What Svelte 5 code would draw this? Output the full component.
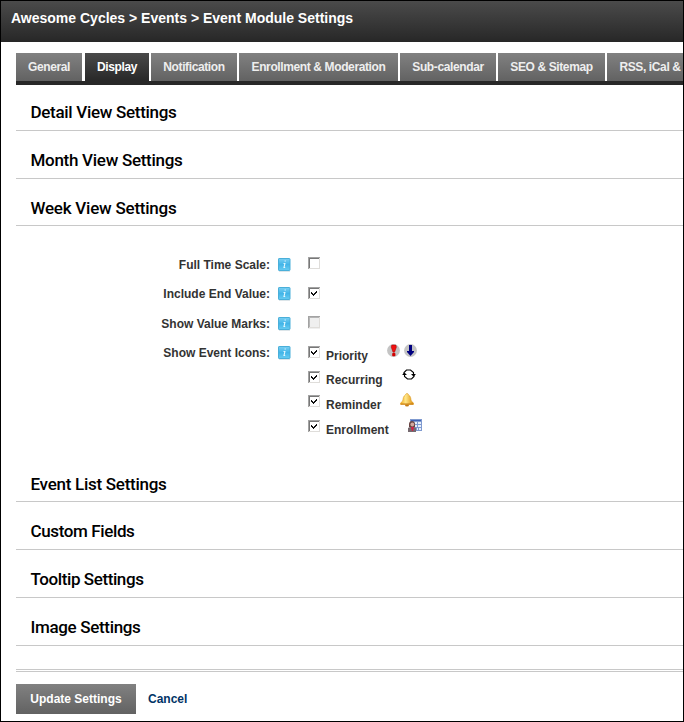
<script>
  const tabs = [
    { name: 'General', w: 66, gap: 3 },
    { name: 'Display', w: 64, gap: 2, active: true },
    { name: 'Notification', w: 86, gap: 2 },
    { name: 'Enrollment & Moderation', w: 159, gap: 2 },
    { name: 'Sub-calendar', w: 96, gap: 2 },
    { name: 'SEO & Sitemap', w: 107, gap: 2 },
    { name: 'RSS, iCal &', w: 86, gap: 0 }
  ];
  const upper = [
    { name: 'Detail View Settings', h: 46, w: 146 },
    { name: 'Month View Settings', h: 48, w: 152 },
    { name: 'Week View Settings', h: 47, w: 146, tight: true }
  ];
  const lower = [
    { name: 'Event List Settings', h: 48, w: 136, tight: true },
    { name: 'Custom Fields', h: 48, w: 104 },
    { name: 'Tooltip Settings', h: 48, w: 113 },
    { name: 'Image Settings', h: 48, w: 110 }
  ];
  const fields = [
    { label: 'Full Time Scale:', h: 30 },
    { label: 'Include End Value:', h: 29, checked: true, raised: true },
    { label: 'Show Value Marks:', h: 30, disabled: true },
    { label: 'Show Event Icons:', h: 25, checked: true, raised: true, option: 'Priority' }
  ];
  const options = [
    { name: 'Recurring', h: 24 },
    { name: 'Reminder', h: 25, low: true },
    { name: 'Enrollment', h: 25, low: true }
  ];

  function fit(node, width) {
    const extra = (width - node.getBoundingClientRect().width) / node.textContent.length;
    node.style.letterSpacing = `${extra}px`;
  }
</script>

{#snippet check(checked, disabled)}
  <svg class="check" width="13" height="13" viewBox="0 0 13 13" shape-rendering="crispEdges">
    <path fill={disabled ? '#efefef' : '#fff'} d="M0 0h12v13H0z" />
    <path fill="#dfddda" d="M11 1h1v11H1v-1h10z" />
    <path fill="#a3a3a3" d="M0 0h12v1H1v11H0z" />
    <path fill={disabled ? '#b5b5b5' : '#777'} d="M1 1h10v1H2v9H1z" />
    {#if checked}
      <path fill="#111" d="M3 5h1v1h1v1h1v-1h1v-1h1v-1h1v2h-1v1h-1v1h-1v1h-1v-1h-1v-1h-1z" />
    {/if}
  </svg>
{/snippet}

{#snippet info()}
  <svg class="info" width="13" height="14" viewBox="0 0 13 14">
    <defs>
      <linearGradient id="blue" x2="0" y2="1">
        <stop stop-color="#7bd0f3" /><stop offset=".5" stop-color="#43b5e8" /><stop offset="1" stop-color="#67ccf2" />
      </linearGradient>
    </defs>
    <path d="M1 13.5h11" stroke="#dce5e9" />
    <rect x=".5" y=".5" width="11.5" height="12" rx=".6" fill="url(#blue)" stroke="#4aafd9" />
    <path d="M6.600 3h1.200M5.500 5.500h1.400l-.9 4h1.200" stroke="#e6f8ff" stroke-width="1.100" fill="none" />
  </svg>
{/snippet}

{#snippet heading(item)}
  <div class="section" class:tight={item.tight} style:height="{item.h}px"><h2 use:fit={item.w}>{item.name}</h2></div>
{/snippet}

<div class="page">
  <header>Awesome Cycles &gt; Events &gt; Event Module Settings</header>
  <main>
    <nav>
      {#each tabs as t}
        <button class:active={t.active} style:width="{t.w}px" style:margin-right="{t.gap}px">{t.name}</button>
      {/each}
    </nav>
    {#each upper as item}{@render heading(item)}{/each}
    <div class="fields">
      {#each fields as f}
        <div class="row" class:raised={f.raised} style:height="{f.h}px">
          <span class="label">{f.label}</span>
          {@render info()}
          {@render check(f.checked, f.disabled)}
          {#if f.option}
            <span class="option low">{f.option}</span>
            <svg class="priority" width="31" height="14" viewBox="0 0 31 14">
              <circle cx="6.5" cy="6.5" r="6.4" fill="#c4c4c4" />
              <circle cx="23.5" cy="6.5" r="6.4" fill="#c4c4c4" />
              <path fill="#f01010" stroke="#a50000" stroke-width=".5" d="M4.800 1h4l.6 2-1.800 5.200h-1.600L4.200 3z" />
              <rect x="5.200" y="9" width="3.200" height="3.200" rx=".8" fill="#d00000" />
              <path fill="#000080" d="M22 1h3v6h2v1l-3.500 4L20 8V7h2z" />
            </svg>
          {/if}
        </div>
      {/each}
      {#each options as o}
        <div class="row sub" style:height="{o.h}px">
          {@render check(true, false)}
          <span class="option" class:low={o.low}>{o.name}</span>
          {#if o.name === 'Recurring'}
            <svg class="recurring" width="14" height="13" viewBox="0 0 14 13">
              <path fill="none" stroke="#000" stroke-width="1.100" d="M2 6V4.500L4.500 2h4l3 2.500V7M12 7v1.500L9.500 11h-4L2.500 8.500V5.500" />
              <path d="M9 6h5l-2.500 2.500zM0 7h5L2.500 4.500z" />
            </svg>
          {:else if o.name === 'Reminder'}
            <svg class="reminder" width="14" height="14" viewBox="0 0 14 14">
              <defs>
                <linearGradient id="gold"><stop stop-color="#f3ae20" /><stop offset=".4" stop-color="#ffe789" /><stop offset="1" stop-color="#dc8d08" /></linearGradient>
              </defs>
              <ellipse cx="7" cy="12" rx="2" ry="1.500" fill="#c57b16" />
              <path fill="url(#gold)" stroke="#d89317" stroke-width=".5" d="M5.500 2c0-2 3-2 3 0C11 3 10.800 6 11.300 8l2.200 2v1.500H.5V10l2.200-2C3.200 6 3 3 5.500 2z" />
              <path d="M1 11h12" stroke="#c77b12" />
            </svg>
          {:else}
            <svg class="enrollment" width="14" height="13" viewBox="0 0 14 13">
              <path fill="#7f9ad0" d="M2 0h12v12H2z" />
              <path fill="#e7effb" d="M6 3h3v2H6zM10 3h3v2h-3zM7 6h2v2H7zM10 6h3v2h-3zM9 9h1v2H9zM11 9h2v2h-2z" />
              <path fill="#3f62b5" d="M3 1h10v1H3z" />
              <path fill="#694342" d="M1 5c0-4 6-4 6 0v3H1z" />
              <circle cx="4.300" cy="5.500" r="1.900" fill="#d2aaa0" />
              <path fill="#766a70" d="M0 13V9l2-1h4l2 1v4z" />
              <path fill="#d41f43" d="M3 8h3l-1 4H4z" />
            </svg>
          {/if}
        </div>
      {/each}
    </div>
    {#each lower as item}{@render heading(item)}{/each}
    <div class="double"></div>
    <div class="actions">
      <button class="update">Update Settings</button>
      <a href="#cancel">Cancel</a>
    </div>
  </main>
</div>

<style>
  :global(body) { margin: 0; background: #fff; }
  .page {
    box-sizing: border-box;
    width: 684px;
    height: 722px;
    border: 1px solid #000;
    overflow: hidden;
    font-family: "Liberation Sans", Arial, sans-serif;
    font-weight: bold;
    font-size: 12px;
    color: #333;
  }
  header {
    box-sizing: border-box;
    height: 41px;
    padding: 9px 0 0 10px;
    background: linear-gradient(#4b4b4b, #272727);
    color: #fff;
    font-size: 14px;
    line-height: 16px;
    white-space: nowrap;
  }
  main { margin-left: 15px; padding-top: 11px; }
  nav { display: flex; height: 28px; border-bottom: 4px solid #282828; }
  button {
    border: 0;
    padding: 0;
    flex: none;
    font: inherit;
    color: #eee;
    white-space: nowrap;
    background: linear-gradient(#818181, #626262);
  }
  nav button { letter-spacing: -.38px; }
  nav button.active { background: linear-gradient(#4a4a4a, #282828); color: #fff; }
  .section {
    box-sizing: border-box;
    display: flex;
    align-items: flex-end;
    padding: 0 0 6px 14.500px;
    border-bottom: 1px solid #c8c8c8;
  }
  .section.tight { padding-bottom: 5px; }
  h2 {
    margin: 0;
    font: 500 17px/24px Roboto, sans-serif;
    color: #000;
    white-space: nowrap;
  }
  .fields { box-sizing: border-box; height: 228px; padding-top: 31px; }
  .row { display: flex; align-items: flex-start; }
  .sub { padding-left: 292px; }
  .label { width: 254px; text-align: right; line-height: 14px; padding-top: 1px; }
  .info { flex: none; margin: 1px 17px 0 8px; }
  .raised .label { padding-top: 0; }
  .raised .info { margin-top: 0; }
  .check { flex: none; }
  .option { margin: 2px 0 0 5px; line-height: 14px; }
  .option.low { margin-top: 3px; }
  .priority { margin: -2px 0 0 19px; }
  .recurring { margin: -3px 0 0 19px; }
  .reminder { margin: -2px 0 0 19px; }
  .enrollment { margin: -1px 0 0 19px; }
  .double { height: 1px; margin-top: 23px; border: solid #c8c8c8; border-width: 1px 0; }
  .actions { display: flex; align-items: center; height: 30px; margin-top: 12px; }
  .update { width: 120px; height: 30px; color: #fff; }
  .actions a { margin-left: 12px; color: #003366; text-decoration: none; }
</style>
